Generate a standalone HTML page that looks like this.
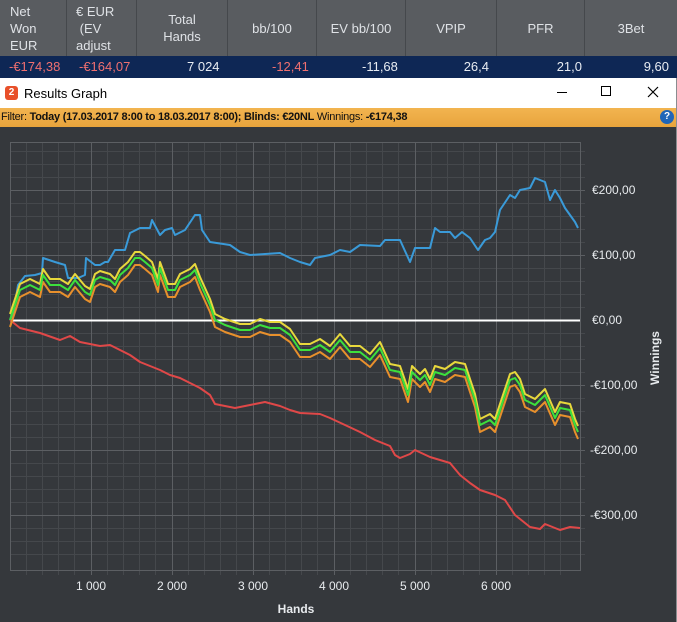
<!DOCTYPE html>
<html><head><meta charset="utf-8"><style>
*{margin:0;padding:0;box-sizing:border-box}
body{width:677px;height:622px;overflow:hidden;background:#35383c;font-family:"Liberation Sans",sans-serif;position:relative}
.hdr{position:absolute;left:0;top:0;width:677px;height:56px;background:#595c60;color:#dfe2e6;font-size:13px}
.hdr div{position:absolute;top:0;height:56px;border-right:1px solid #45484c;display:flex;align-items:center;justify-content:center;text-align:center;line-height:17px}
.row{position:absolute;left:0;top:56px;width:677px;height:22px;background:#0e2755;color:#e8ecf2;font-size:13px}
.row span{position:absolute;top:3px}
.red{color:#f07070}
.title{position:absolute;left:0;top:78px;width:677px;height:30px;background:#fff;font-size:13px;color:#000}
.filter{position:absolute;left:0;top:108px;width:677px;height:19px;background:linear-gradient(#f2b450,#e8a43c);font-size:11px;letter-spacing:-0.25px;color:#111;padding:3px 0 0 1px;white-space:nowrap}
</style></head><body>
<div class="hdr">
<div style="left:0;width:67px;justify-content:flex-start;padding-left:10px;text-align:left">Net<br>Won<br>EUR</div>
<div style="left:67px;width:70px;justify-content:flex-start;padding-left:9px;text-align:left">€ EUR<br>&nbsp;(EV<br>adjust</div>
<div style="left:137px;width:91px">Total<br>Hands</div>
<div style="left:228px;width:89px">bb/100</div>
<div style="left:317px;width:89px">EV bb/100</div>
<div style="left:406px;width:91px">VPIP</div>
<div style="left:497px;width:88px">PFR</div>
<div style="left:585px;width:92px;border:none">3Bet</div>
</div>
<div class="row">
<span class="red" style="left:9px">-€174,38</span>
<span class="red" style="left:79px">-€164,07</span>
<span style="left:187px">7 024</span>
<span class="red" style="left:272px">-12,41</span>
<span style="left:362px">-11,68</span>
<span style="left:420px;width:69px;text-align:right">26,4</span>
<span style="left:512px;width:70px;text-align:right">21,0</span>
<span style="left:570px;width:99px;text-align:right">9,60</span>
</div>
<div class="title">
<div style="position:absolute;left:5px;top:8px;width:13px;height:14px;background:#e8502a;border-radius:3px;color:#fff;font-size:10px;font-weight:bold;text-align:center;line-height:14px">2</div>
<span style="position:absolute;left:24px;top:8px">Results Graph</span>
<div style="position:absolute;left:557px;top:14px;width:10px;height:1px;background:#000"></div>
<div style="position:absolute;left:601px;top:8px;width:10px;height:10px;border:1px solid #000"></div>
<svg style="position:absolute;left:647px;top:8px" width="12" height="12"><path d="M1 1L11 11M11 1L1 11" stroke="#000" stroke-width="1.2"/></svg>
</div>
<div class="filter">Filter: <b style="font-weight:bold">Today (17.03.2017 8:00 to 18.03.2017 8:00); Blinds: €20NL</b> Winnings: <b>-€174,38</b>
<div style="position:absolute;left:660px;top:2px;width:14px;height:14px;border-radius:50%;background:#1f66b8;color:#fff;font-size:10px;font-weight:bold;text-align:center;line-height:14px;letter-spacing:0">?</div></div>
<div style="position:absolute;left:676px;top:78px;width:1px;height:544px;background:#8a8d90"></div>
<svg style="position:absolute;left:0;top:0" width="677" height="622">
<g stroke="#45484c" stroke-width="1">
<path d="M26.5 142V575M42.5 142V575M58.5 142V575M74.5 142V575M107.5 142V575M123.5 142V575M139.5 142V575M155.5 142V575M188.5 142V575M204.5 142V575M220.5 142V575M236.5 142V575M269.5 142V575M285.5 142V575M301.5 142V575M317.5 142V575M350.5 142V575M366.5 142V575M382.5 142V575M398.5 142V575M431.5 142V575M447.5 142V575M463.5 142V575M479.5 142V575M512.5 142V575M528.5 142V575M544.5 142V575M560.5 142V575"/>
<path d="M10 151.5H585M10 164.5H585M10 177.5H585M10 203.5H585M10 216.5H585M10 229.5H585M10 242.5H585M10 268.5H585M10 281.5H585M10 294.5H585M10 307.5H585M10 333.5H585M10 346.5H585M10 359.5H585M10 372.5H585M10 398.5H585M10 411.5H585M10 424.5H585M10 437.5H585M10 463.5H585M10 476.5H585M10 489.5H585M10 502.5H585M10 528.5H585M10 541.5H585M10 554.5H585"/>
</g>
<g stroke="#5c5f63" stroke-width="1" fill="none">
<path d="M91.5 142V575M172.5 142V575M253.5 142V575M334.5 142V575M415.5 142V575M496.5 142V575"/>
<path d="M10 190.5H585M10 255.5H585M10 385.5H585M10 450.5H585M10 515.5H585"/>
<rect x="10.5" y="142.5" width="570" height="428"/>
</g>
<line x1="10" y1="320.5" x2="580" y2="320.5" stroke="#fff" stroke-width="2"/>
<g fill="none" stroke-width="2" stroke-linejoin="round">
<polyline stroke="#3a9ad8" points="10,320 14,310 18,285 25,276 35,275 42,273 43,258 55,262 65,265 68,278 78,278 85,275 86,258 95,265 100,265 105,262 108,262 115,250 125,250 130,233 140,228 150,228 152,220 160,235 165,230 172,228 175,235 185,230 195,215 200,215 202,230 210,242 230,245 240,252 250,255 280,253 290,258 300,262 310,265 315,258 330,255 340,250 350,252 360,245 380,246 385,240 400,240 410,262 415,248 430,248 435,228 440,232 450,232 455,238 462,232 470,238 478,250 485,240 490,238 495,232 500,210 510,195 515,198 520,190 530,188 535,178 545,182 550,200 555,190 560,198 565,208 570,215 575,222 578,228"/>
<polyline stroke="#e04848" points="10,320 20,328 40,333 60,340 70,336 80,342 100,346 110,345 120,350 130,355 140,362 150,366 160,370 170,375 180,378 190,383 200,388 210,395 215,404 225,406 235,408 250,405 265,402 280,406 290,410 300,413 320,414 330,418 345,425 360,432 375,440 390,446 395,455 400,458 410,454 415,450 430,457 450,463 460,475 470,483 480,490 495,495 505,500 515,515 530,527 540,529 545,524 560,530 570,527 580,528"/>
<g id="gl"><polyline id="gp" points="10,320 15,305 20,290 30,285 40,290 43,275 50,285 60,285 68,290 75,280 85,292 90,295 95,280 100,277 110,280 115,285 120,275 128,268 135,258 140,258 145,262 152,268 158,285 160,268 168,290 175,290 180,280 190,275 195,270 200,283 210,305 215,320 225,325 240,330 250,330 260,325 270,328 280,328 290,335 300,350 310,350 320,345 330,352 340,340 350,352 360,352 370,360 380,348 390,370 400,372 408,395 412,372 420,380 425,375 430,385 435,372 445,375 455,368 465,370 475,400 480,425 490,420 495,425 505,395 510,380 515,378 520,385 525,400 535,405 545,395 555,418 560,408 570,410 575,425 578,432"/></g>
<use href="#gp" stroke="#e8902c" transform="translate(0,7)"/>
<use href="#gp" stroke="#e8d83c" transform="translate(0,-6)"/>
<use href="#gp" stroke="#3ce03c"/>
</g>
<g fill="#e8ebee" font-size="12" font-family="Liberation Sans, sans-serif">
<text x="592" y="194">€200,00</text>
<text x="592" y="259">€100,00</text>
<text x="592" y="324">€0,00</text>
<text x="590" y="389">-€100,00</text>
<text x="590" y="454">-€200,00</text>
<text x="590" y="519">-€300,00</text>
<g text-anchor="middle">
<text x="91" y="590">1 000</text><text x="172" y="590">2 000</text><text x="253" y="590">3 000</text><text x="334" y="590">4 000</text><text x="415" y="590">5 000</text><text x="496" y="590">6 000</text>
<text x="296" y="613" font-weight="bold">Hands</text>
<text transform="translate(659,358) rotate(-90)" font-weight="bold">Winnings</text>
</g></g>
</svg>
</body></html>
